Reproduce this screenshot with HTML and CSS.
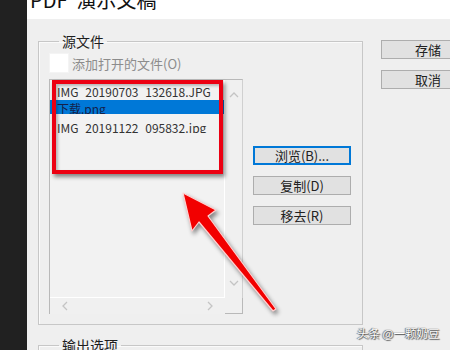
FILE: index.html
```html
<!DOCTYPE html>
<html>
<head>
<meta charset="utf-8">
<link rel="stylesheet" href="styles.css">
</head>
<body>
<div class="side"></div>
<div class="main">
  <div class="titlebar"><span class="title">PDF&nbsp; 演示文稿</span></div>
  <div class="content">
    <div class="groups">
      <fieldset class="group">
        <legend>源文件</legend>
        <div class="check-row">
          <span class="checkbox"></span>
          <span class="check-label">添加打开的文件(O)</span>
        </div>
        <div class="list-row">
          <div class="listbox">
            <div class="items">
              <div class="item item1"><span>IMG_20190703_132618.JPG</span></div>
              <div class="item item2 selected"><span>下载.png</span></div>
              <div class="item item3"><span>IMG_20191122_095832.jpg</span></div>
            </div>
            <div class="vscroll">
              <svg class="arrow-up" width="10" height="6" viewBox="0 0 10 6"><path d="M1 5 L5 1 L9 5" fill="none" stroke="#c4c4c4" stroke-width="1.3"/></svg>
              <svg class="arrow-down" width="10" height="6" viewBox="0 0 10 6"><path d="M1 1 L5 5 L9 1" fill="none" stroke="#c4c4c4" stroke-width="1.3"/></svg>
            </div>
            <div class="hscroll">
              <svg width="6" height="10" viewBox="0 0 6 10"><path d="M5 1 L1 5 L5 9" fill="none" stroke="#c4c4c4" stroke-width="1.3"/></svg>
              <svg width="6" height="10" viewBox="0 0 6 10"><path d="M1 1 L5 5 L1 9" fill="none" stroke="#c4c4c4" stroke-width="1.3"/></svg>
            </div>
            <div class="corner"></div>
            <div class="redbox"></div>
          </div>
          <div class="btn-col">
            <div class="btn focused">浏览(B)...</div>
            <div class="btn">复制(D)</div>
            <div class="btn">移去(R)</div>
          </div>
        </div>
      </fieldset>
      <fieldset class="group group2">
        <legend>输出选项</legend>
      </fieldset>
    </div>
    <div class="right-col">
      <div class="btn wide">存储</div>
      <div class="btn wide">取消</div>
    </div>
  </div>
</div>
<svg class="arrow" width="450" height="350" viewBox="0 0 450 350">
  <polygon points="183,193 216,210 208,216 276,309 273,311 199,222 192,231" fill="#f20000" stroke="#ffd0d0" stroke-width="1.2" stroke-linejoin="round"/>
</svg>
<div class="watermark">头条 @一颗奶豆</div>
</body>
</html>
```
FILE: styles.css
```css
html, body {
  margin: 0;
  padding: 0;
}
body {
  width: 450px;
  height: 350px;
  overflow: hidden;
  display: flex;
  position: relative;
  background: #efefef;
  font-family: "Noto Sans CJK SC", "Noto Sans", sans-serif;
  color: #1e1e1e;
}
.side {
  width: 27px;
  flex: none;
  background: #212121;
}
.main {
  flex: 1;
  display: flex;
  flex-direction: column;
  min-width: 0;
}
.titlebar {
  height: 19px;
  flex: none;
  background: #ffffff;
  overflow: hidden;
  padding-left: 3px;
}
.title {
  display: block;
  font-size: 20px;
  line-height: 20px;
  margin-top: -10px;
  color: #111;
  white-space: nowrap;
}
.content {
  display: flex;
  padding-left: 11px;
  align-items: flex-start;
}
.groups {
  width: 325px;
  flex: none;
}
.group {
  box-sizing: border-box;
  width: 325px;
  margin: 14px 0 0 0;
  padding: 4px 0 10px 10px;
  border: 1px solid #c7c7c7;
  box-shadow: inset 1px 1px 0 #fafafa;
  min-width: 0;
}
.group legend {
  margin-left: 10px;
  padding: 0 3px;
  font-size: 14px;
  line-height: 16px;
  color: #1e1e1e;
}
.group2 {
  margin-top: 12px;
  height: 40px;
}
.check-row {
  display: flex;
  align-items: center;
  gap: 3px;
  height: 20px;
  margin-bottom: 6px;
}
.checkbox {
  width: 20px;
  height: 20px;
  box-sizing: border-box;
  background: #ffffff;
  border: 1px solid #f4f4f4;
}
.check-label {
  font-size: 13px;
  color: #8c8c8c;
  white-space: nowrap;
}
.list-row {
  display: flex;
  gap: 10px;
  align-items: flex-start;
}
.listbox {
  position: relative;
  box-sizing: border-box;
  width: 194px;
  height: 235px;
  border: 1px solid #b9b9b9;
  border-right-color: #d0d0d0;
  border-bottom: none;
  background: #f0f0f0;
  display: grid;
  grid-template-columns: 1fr 17px;
  grid-template-rows: 1fr 16px;
}
.items {
  background: #f2f2f2;
  border-bottom: 1px solid #ffffff;
  border-right: 1px solid #ffffff;
  overflow: hidden;
}
.item {
  height: 14px;
  overflow: hidden;
  padding-left: 7px;
  font-size: 12px;
  white-space: nowrap;
}
.item span {
  display: block;
  line-height: 14px;
  margin-top: 2px;
}
.item1 { margin-top: 3px; color: #333; }
.item2 { margin-top: 3px; }
.item3 { margin-top: 5px; color: #333; }
.selected {
  background: #0078d7;
  color: #14204a;
}
.vscroll {
  display: flex;
  flex-direction: column;
  justify-content: space-between;
  align-items: center;
  padding: 12px 0 12px;
}
.hscroll {
  display: flex;
  justify-content: space-between;
  align-items: center;
  padding: 0 12px;
  border-bottom: 1px solid #f0f0f0;
}
.corner {
  border-right: 1px solid #b9b9b9;
  border-bottom: 1px solid #b9b9b9;
  margin: 0 -1px 0 0;
}
.redbox {
  position: absolute;
  left: 2px;
  top: 0;
  width: 171px;
  height: 94px;
  box-sizing: border-box;
  border: 4px solid #ec0012;
  box-shadow: 2px 3px 4px rgba(0, 0, 0, 0.45), inset 2px 2px 3px rgba(0, 0, 0, 0.25);
}
.btn-col {
  display: flex;
  flex-direction: column;
  gap: 11px;
  margin-top: 67px;
}
.btn {
  box-sizing: border-box;
  width: 98px;
  height: 19px;
  background: #e1e1e1;
  border: 1px solid #adadad;
  font-size: 13px;
  line-height: 17px;
  text-align: center;
  color: #222;
  white-space: nowrap;
}
.btn.focused {
  border: 2px solid #0078d7;
  line-height: 15px;
}
.right-col {
  display: flex;
  flex-direction: column;
  gap: 11px;
  margin: 21px 0 0 18px;
  flex: none;
}
.btn.wide {
  width: 94px;
}
.arrow {
  position: absolute;
  left: 0;
  top: 0;
  pointer-events: none;
  filter: drop-shadow(2px 3px 2px rgba(0, 0, 0, 0.45));
}
.watermark {
  position: absolute;
  left: 357px;
  top: 326px;
  font-size: 11.5px;
  line-height: 15px;
  color: #ffffff;
  text-shadow: 0 0 1px #444, 1px 1px 1px #555, -1px 0 1px #777;
  white-space: nowrap;
}
```
